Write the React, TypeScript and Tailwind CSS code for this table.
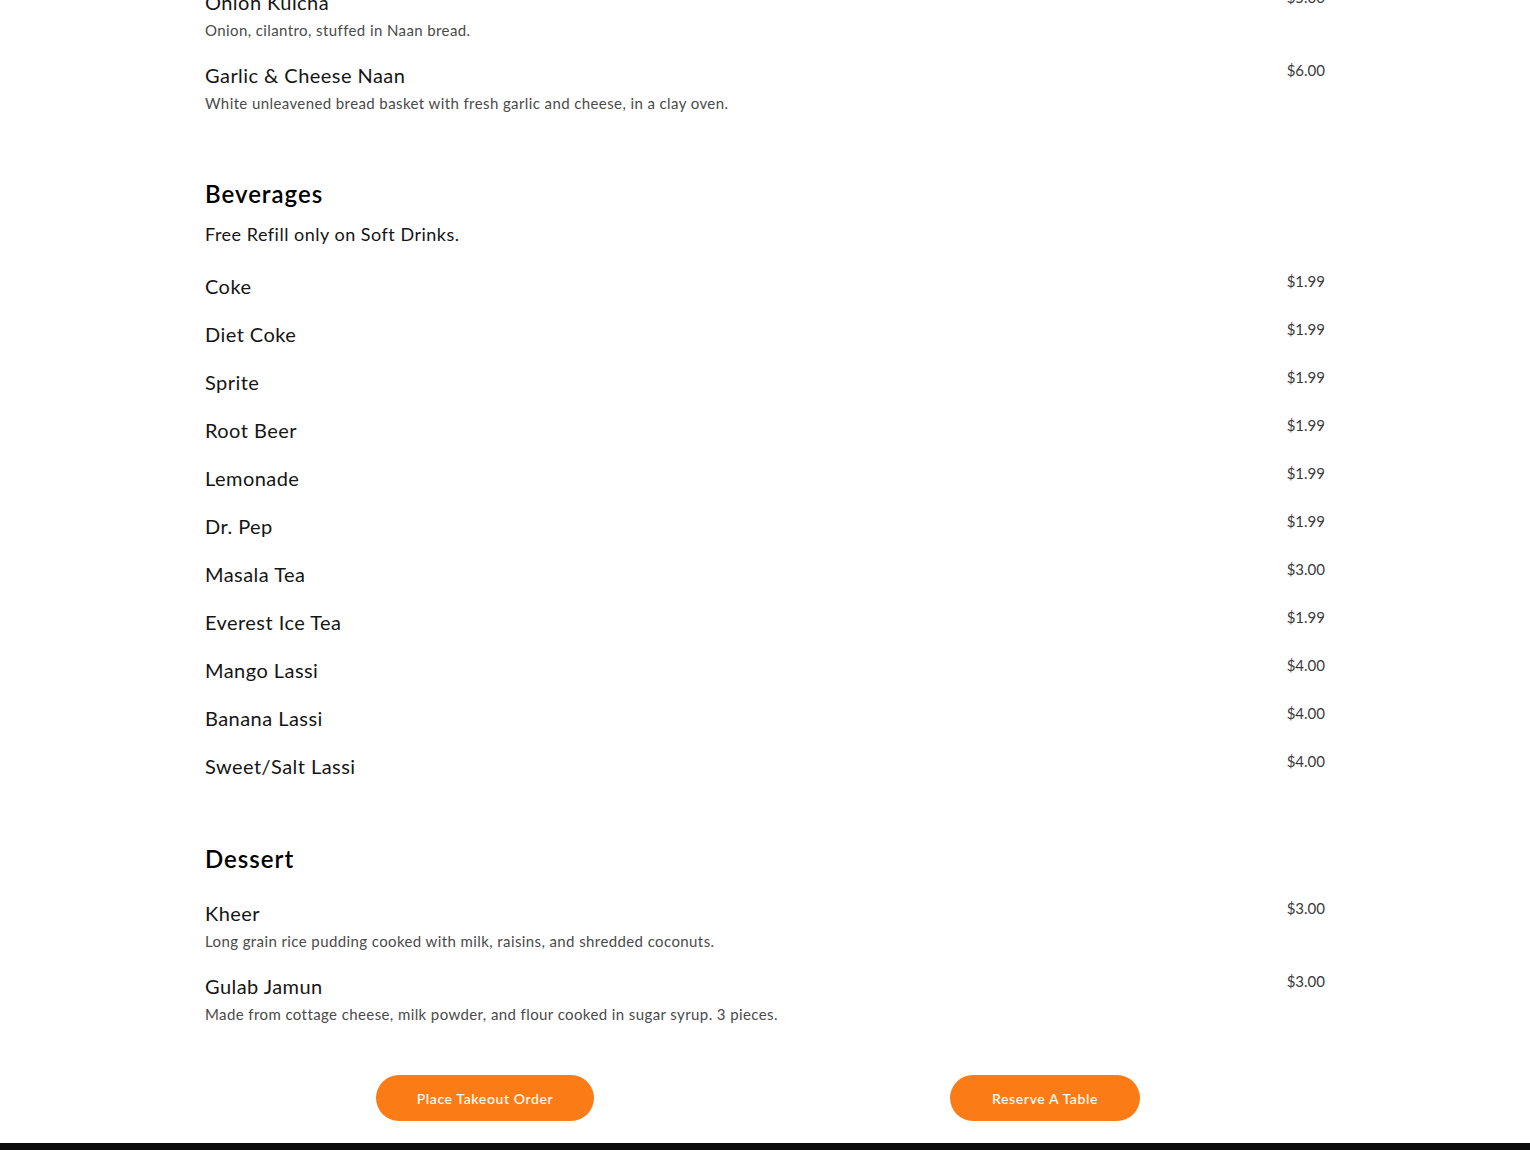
type Item = { name: string; price: string; desc?: string };

const breads: Item[] = [
  { name: 'Onion Kulcha', price: '$5.00', desc: 'Onion, cilantro, stuffed in Naan bread.' },
  { name: 'Garlic & Cheese Naan', price: '$6.00', desc: 'White unleavened bread basket with fresh garlic and cheese, in a clay oven.' },
];

const beverages: Item[] = [
  { name: 'Coke', price: '$1.99' },
  { name: 'Diet Coke', price: '$1.99' },
  { name: 'Sprite', price: '$1.99' },
  { name: 'Root Beer', price: '$1.99' },
  { name: 'Lemonade', price: '$1.99' },
  { name: 'Dr. Pep', price: '$1.99' },
  { name: 'Masala Tea', price: '$3.00' },
  { name: 'Everest Ice Tea', price: '$1.99' },
  { name: 'Mango Lassi', price: '$4.00' },
  { name: 'Banana Lassi', price: '$4.00' },
  { name: 'Sweet/Salt Lassi', price: '$4.00' },
];

const desserts: Item[] = [
  { name: 'Kheer', price: '$3.00', desc: 'Long grain rice pudding cooked with milk, raisins, and shredded coconuts.' },
  { name: 'Gulab Jamun', price: '$3.00', desc: 'Made from cottage cheese, milk powder, and flour cooked in sugar syrup. 3 pieces.' },
];

function MenuItem({ item }: { item: Item }) {
  return (
    <div className="flex items-start justify-between">
      <div>
        <div className="text-[20px] leading-[28px] tracking-[0.45px] text-[#151515]">{item.name}</div>
        {item.desc && (
          <div className="mt-[2px] text-[15px] leading-[24px] tracking-[0.4px] text-[#4a4a4a]">{item.desc}</div>
        )}
      </div>
      <div className="-mt-px text-[15px] leading-[20px] text-[#3a3a3a]">{item.price}</div>
    </div>
  );
}

function Section({ title, note, items, tight }: { title?: string; note?: string; items: Item[]; tight?: boolean }) {
  return (
    <section>
      {title && <h2 className="text-[24px] font-semibold leading-[32px] tracking-[1px] text-black">{title}</h2>}
      {note && <p className="mt-[10px] text-[18px] leading-[28px] tracking-[0.5px] text-[#151515]">{note}</p>}
      <div className={`${title ? 'mt-6' : ''} flex flex-col ${tight ? 'gap-5' : 'gap-[19px]'}`}>
        {items.map((item) => (
          <MenuItem key={item.name} item={item} />
        ))}
      </div>
    </section>
  );
}

export default function App() {
  return (
    <div className="min-h-[1150px] bg-white font-['Lato','Liberation_Sans',sans-serif]">
      <div className="mx-auto w-[1120px] -mt-[12px] flex flex-col gap-[63px]">
        <Section items={breads} />
        <Section title="Beverages" note="Free Refill only on Soft Drinks." items={beverages} tight />
        <Section title="Dessert" items={desserts} />
      </div>

      {/* Order buttons */}
      <div className="mx-auto mt-[49px] grid w-[1120px] grid-cols-2">
        <div className="flex justify-center">
          <button className="h-[46px] w-[218px] rounded-full bg-[#fb7c17] text-[14px] font-semibold tracking-[0.6px] text-[#fff8ef]">
            Place Takeout Order
          </button>
        </div>
        <div className="flex justify-center">
          <button className="h-[46px] w-[190px] rounded-full bg-[#fb7c17] text-[14px] font-semibold tracking-[0.6px] text-[#fff8ef]">
            Reserve A Table
          </button>
        </div>
      </div>

      <div className="mt-[22px] h-[40px] bg-[#0b0b0b]" />
    </div>
  );
}
